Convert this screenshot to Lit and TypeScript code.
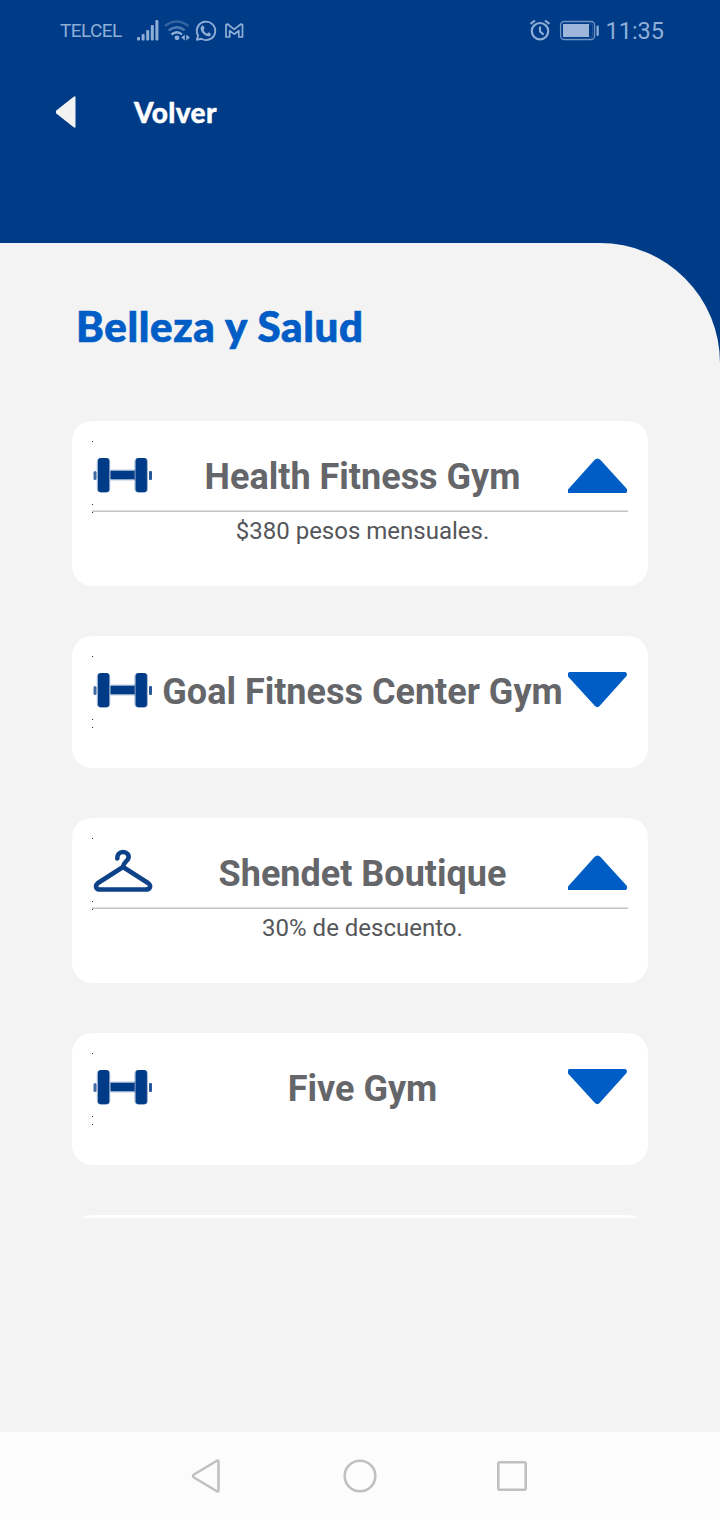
import { LitElement, html, svg, css, nothing } from "lit";
import { customElement, property } from "lit/decorators.js";

interface Offer {
  name: string;
  icon: "dumbbell" | "hanger";
  detail?: string;
}

const OFFERS: Offer[] = [
  { name: "Health Fitness Gym", icon: "dumbbell", detail: "$380 pesos mensuales." },
  { name: "Goal Fitness Center Gym", icon: "dumbbell" },
  { name: "Shendet Boutique", icon: "hanger", detail: "30% de descuento." },
  { name: "Five Gym", icon: "dumbbell" },
];

const dumbbell = svg`
  <g fill="#003b87">
    <rect x="1.500" y="30" width="3" height="9" rx="1.500" opacity=".75"></rect>
    <rect x="57" y="30" width="3" height="9" rx="1" opacity=".85"></rect>
    <rect x="18.500" y="28.700" width="25" height="10.600" opacity=".45"></rect>
    <rect x="18.500" y="30" width="24" height="8"></rect>
    <rect x="4.800" y="17" width="13.400" height="34.400" rx="4" opacity=".4"></rect>
    <rect x="6" y="17" width="11.200" height="34.200" rx="3"></rect>
    <rect x="42.500" y="17" width="13.400" height="34.400" rx="4" opacity=".4"></rect>
    <rect x="43.700" y="17" width="11.200" height="34.200" rx="3"></rect>
  </g>`;

const hanger = svg`
  <g fill="none" stroke="#0d4289" stroke-width="4.600" stroke-linecap="round" stroke-linejoin="round">
    <path d="M25.300 20.500C25 16.500 27.500 14 31 14C35 14 37.500 17 36.300 20.500C35.300 23.500 31.500 24 31 29"></path>
    <path d="M31 29L6 45C2.500 48 4 51.500 8 51.500H53.500C58.500 51.500 59.500 47.500 56 45Z"></path>
  </g>`;

@customElement("status-bar")
export class StatusBar extends LitElement {
  static styles = css`
    :host {
      display: flex;
      align-items: center;
      height: 62px;
      padding: 0 56px 0 60px;
      color: #8faed6;
      font-family: Roboto, sans-serif;
    }
    .carrier { font-size: 19px; line-height: 24px; width: 76px; letter-spacing: -0.6px; white-space: nowrap; }
    .spacer { flex: 1; }
    .clock { font-size: 23.5px; line-height: 28px; margin-left: 5px; }
    svg { display: block; }
  `;

  render() {
    return html`
      <span class="carrier">TELCEL</span>
      <svg width="110" height="30" viewBox="136 16 110 30" fill="none" stroke="#8faed6">
        <g stroke="none" fill="#8faed6">
          <rect x="137" y="37" width="3" height="3.500" rx="1"></rect>
          <rect x="141.600" y="34" width="3" height="6.500" rx="1"></rect>
          <rect x="146.200" y="30" width="3" height="10.500" rx="1"></rect>
          <rect x="150.800" y="25" width="3" height="15.500" rx="1"></rect>
          <rect x="155.400" y="20" width="3" height="20.500" rx="1"></rect>
        </g>
        <g stroke-width="2.400">
          <path d="M165 26Q176.500 16.800 188.500 26" stroke="#35639f"></path>
          <path d="M168.700 30.400Q176.500 24 184.700 30.400" stroke="#4f7ab3"></path>
          <path d="M171.500 34.500Q177 29.800 182 34.500"></path>
        </g>
        <circle cx="177" cy="37.800" r="2.400" fill="#8faed6" stroke="none"></circle>
        <path d="M184.800 34.500V40.500L181.300 37.500ZM186.300 34.500V40.500L189.800 37.500Z" fill="#8faed6" stroke="none"></path>
        <path d="M196.900 39.700L198.100 35.500A9.200 9.200 0 1 1 201.400 38.800Z" stroke-width="1.900" stroke-linejoin="round"></path>
        <path d="M202 25.200L204 26.400L204.500 28.700L203.500 30C204.300 31.900 205.400 32.900 207 33.700L208.400 32.300L210.900 33.700L210.500 35.700C206.700 38.200 200.200 32.200 200.600 28Z" fill="#8faed6" stroke="none"></path>
        <path d="M226 37V24.800L227.500 24L234.200 29.300L241 24L242.500 24.800V37H238.800V30.700L234.200 34.200L229.700 30.700V37Z" stroke-width="1.700" stroke-linejoin="round"></path>
      </svg>
      <span class="spacer"></span>
      <svg width="72" height="30" viewBox="528 16 72 30" fill="none" stroke="#8faed6">
        <circle cx="540" cy="31.200" r="8.200" stroke-width="2.200"></circle>
        <path d="M540 26.600V31.600L543.600 34.600M530.500 23.800L535 20.500M549.500 23.800L545 20.500" stroke-width="2.100"></path>
        <rect x="560.600" y="21.500" width="34" height="18" rx="3.500" stroke-width="1.300" stroke="#7095c5"></rect>
        <rect x="563" y="24" width="26" height="13" fill="#9db6d9" stroke="none"></rect>
        <path d="M589.500 24H591.500Q592.500 24 592.500 25V36Q592.500 37 591.500 37H589.500" stroke="#285899"></path>
        <rect x="596.500" y="25.500" width="2.300" height="10.500" rx="1" fill="#8faed6" stroke="none"></rect>
      </svg>
      <span class="clock">11:35</span>
    `;
  }
}

@customElement("offer-card")
export class OfferCard extends LitElement {
  @property({ attribute: false }) offer!: Offer;

  static styles = css`
    :host {
      display: block;
      flex: none;
      box-sizing: border-box;
      min-height: 132px;
      padding: 20px;
      border-radius: 20px;
      background: #fff;
      font-family: Roboto, sans-serif;
    }
    :host([open]) { height: 165px; }
    .head { display: grid; grid-template-columns: 60px 1fr 60px; height: 69px; }
    svg { display: block; overflow: visible; }
    .title {
      margin: 15px -8px 0 -3px;
      font-size: 36px;
      line-height: 42px;
      font-weight: 700;
      color: #65666a;
      text-align: center;
      white-space: nowrap;
    }
    .rule { height: 1px; background: #c4c4c6; border-top: 1px solid #dedede; }
    .detail {
      margin: 5px 0 0 5px;
      font-size: 24px;
      line-height: 28px;
      color: #55565a;
      text-align: center;
    }
  `;

  render() {
    const { name, icon, detail } = this.offer;
    return html`
      <div class="head">
        <svg width="60" height="72" viewBox="0 0 60 72">
          ${icon === "dumbbell" ? dumbbell : hanger}
          <path d="M0 0h1v1h-1zM0 63h1v1h-1zM0 71h1v1h-1z" fill="#4a2024"></path>
        </svg>
        <div class="title">${name}</div>
        <svg width="60" height="72" viewBox="0 0 60 72">
          <path
            fill="#005dc6"
            d=${detail
              ? "M0 52V48.500L26.500 19Q29.500 16 32.500 19L58.500 47.500Q60 50 58 52Z"
              : "M0 17.500Q0 16 1.500 16H57Q59 16 59 18.500L58.500 20L32 49.500Q29.500 53 26.500 49.500L0 20.500Z"}
          ></path>
        </svg>
      </div>
      ${detail ? html`<div class="rule"></div><div class="detail">${detail}</div>` : nothing}
    `;
  }
}

@customElement("nav-bar")
export class NavBar extends LitElement {
  static styles = css`
    :host {
      display: flex;
      justify-content: center;
      align-items: center;
      gap: 116px;
      height: 88px;
      background: #fcfcfc;
    }
    svg { display: block; }
  `;

  render() {
    return html`
      ${[
        svg`<path d="M28.500 4V32Q28.500 34 26.500 33L4 19.500Q2 18 4 16.500L26.500 3Q28.500 2 28.500 4Z"></path>`,
        svg`<circle cx="18" cy="18" r="15.300"></circle>`,
        svg`<rect x="4.300" y="4.300" width="27.400" height="27.400" rx="1.500"></rect>`,
      ].map(
        (shape) => html`<svg width="36" height="36" viewBox="0 0 36 36" fill="none" stroke="#c0c0c0" stroke-width="2.600" stroke-linejoin="round">${shape}</svg>`
      )}
    `;
  }
}

@customElement("app-root")
export class AppRoot extends LitElement {
  static styles = css`
    :host {
      display: flex;
      flex-direction: column;
      height: 1520px;
      background: #003b87;
      overflow: hidden;
    }
    .top { height: 243px; flex: none; }
    .back { display: flex; align-items: center; height: 100px; padding-left: 55px; }
    .back svg { display: block; }
    .label {
      margin-left: 58px;
      font: 900 28px/34px Lato, sans-serif;
      letter-spacing: 0.35px;
      -webkit-text-stroke: 0.4px #fff;
      color: #fff;
    }
    .sheet {
      flex: 1;
      box-sizing: border-box;
      padding: 57px 72px 0;
      border-top-right-radius: 120px;
      background: #f3f3f3;
    }
    h1 {
      margin: 0 0 69px 4px;
      font: 900 42px/52px Lato, sans-serif;
      letter-spacing: 0.65px;
      -webkit-text-stroke: 0.7px #005dc6;
      color: #005dc6;
      white-space: nowrap;
    }
    .list { display: flex; flex-direction: column; gap: 50px; height: 797px; overflow: hidden; }
    .next { flex: none; height: 132px; border-radius: 20px; background: #fff; }
  `;

  render() {
    return html`
      <div class="top">
        <status-bar></status-bar>
        <div class="back">
          <svg width="21" height="32" viewBox="0 0 21 32"><path d="M20.500 .500V31.500H19L1.300 17.500Q.300 16 1.300 14.500L19 .500Z" fill="#f2f2f2"></path></svg>
          <span class="label">Volver</span>
        </div>
      </div>
      <div class="sheet">
        <h1>Belleza y Salud</h1>
        <div class="list">
          ${OFFERS.map((o) => html`<offer-card .offer=${o} ?open=${!!o.detail}></offer-card>`)}
          <div class="next"></div>
        </div>
      </div>
      <nav-bar></nav-bar>
    `;
  }
}
